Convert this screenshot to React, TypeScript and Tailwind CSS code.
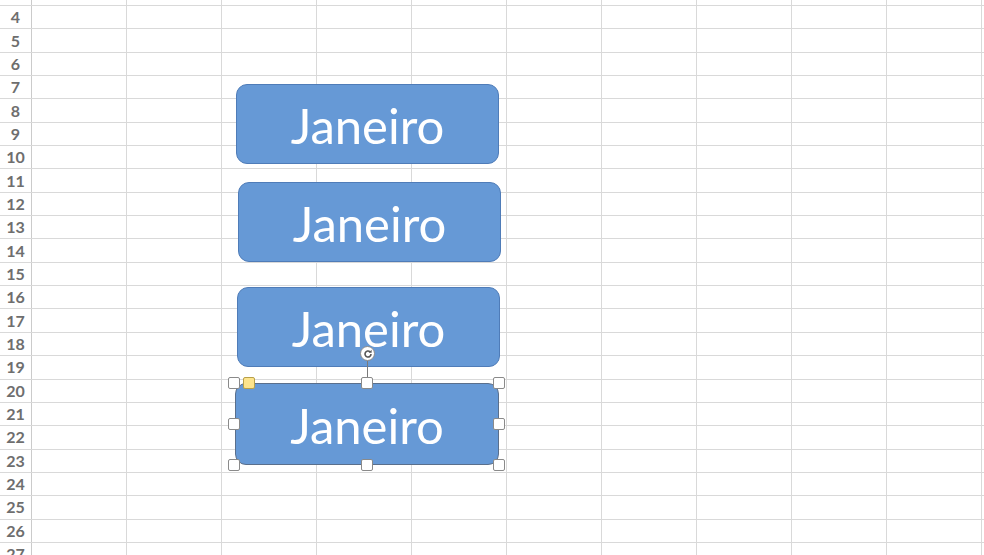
const ROWS = Array.from({ length: 25 }, (_, i) => i + 3);
const COLS = Array.from({ length: 10 }, (_, i) => i);

function Shape({ className = "" }: { className?: string }) {
    return (
        <div className={`w-[263px] h-[80px] rounded-[11px] bg-[#6699d6] border border-[#4f7cb8] flex items-center justify-center ${className}`}>
            <span className="text-white text-[49px] leading-none pt-[2px] font-['Lato',sans-serif]">Janeiro</span>
        </div>
    );
}

function Handle() {
    return <div className="w-[12px] h-[12px] bg-white border border-[#8a8a8a] rounded-[2px]" />;
}

export default function App() {
    return (
        <div className="relative w-[984px] h-[555px] overflow-hidden bg-white">
            {/* sheet grid */}
            <div className="-mt-[17.35px]">
                {ROWS.map((r) => (
                    <div key={r} className="flex h-[23.35px] border-b border-[#d9d9d9]">
                        <div className="w-[32px] shrink-0 border-r border-[#cbcbcb] flex items-center justify-center text-[16px] font-bold text-[#6e6e6e] font-['Lato',sans-serif]">
                            {r}
                        </div>
                        {COLS.map((c) => (
                            <div key={c} className="w-[95px] shrink-0 border-r border-[#d9d9d9]" />
                        ))}
                    </div>
                ))}
            </div>

            {/* drawing objects floating over the sheet */}
            <div className="absolute left-[228px] top-[84px] flex flex-col items-start">
                <Shape className="ml-[8px]" />
                <Shape className="ml-[10px] mt-[18px]" />
                <Shape className="ml-[9px] mt-[25px]" />

                {/* rotation handle */}
                <div className="ml-[132px] -mt-[21px] w-[15px] h-[15px] rounded-full bg-white border border-[#8a8a8a] flex items-center justify-center relative z-10">
                    <svg width="10" height="10" viewBox="0 0 10 10">
                        <path d="M8 5a3 3 0 1 1-1-2.2" fill="none" stroke="#555" strokeWidth="1.6" />
                        <path d="M8.6 0.8v3h-3z" fill="#555" />
                    </svg>
                </div>
                <div className="ml-[139px] w-px h-[22px] bg-[#7a7a7a]" />

                {/* selected shape with its handles */}
                <div className="relative -mt-[6px] w-[277px] h-[94px]">
                    <div className="absolute inset-[6px] flex">
                        <Shape className="ml-[1px] w-[264px] h-[82px] border-[#5a6f8c]" />
                    </div>
                    <div className="absolute inset-0 flex flex-col justify-between">
                        <div className="flex justify-between">
                            <Handle />
                            <Handle />
                            <Handle />
                        </div>
                        <div className="flex justify-between">
                            <Handle />
                            <Handle />
                        </div>
                        <div className="flex justify-between">
                            <Handle />
                            <Handle />
                            <Handle />
                        </div>
                    </div>
                    <div className="absolute left-[15px] top-0 w-[12px] h-[12px] bg-[#fde48c] border border-[#b8a04a] rounded-[2px]" />
                </div>
            </div>
        </div>
    );
}
